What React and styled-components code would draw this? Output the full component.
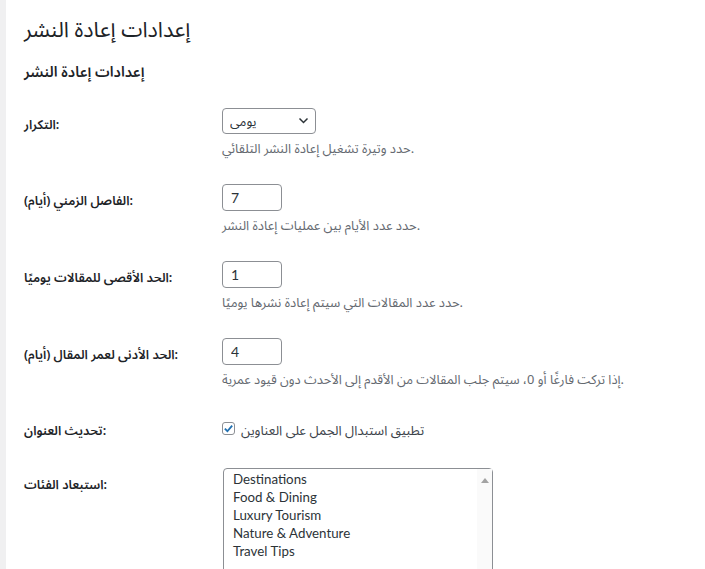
import React from "react";
import styled, { createGlobalStyle } from "styled-components";

const Global = createGlobalStyle`
  html, body { margin: 0; padding: 0; background: #fff; }
  body {
    font-family: "Segoe UI", "Noto Sans", "Noto Sans Arabic", "DejaVu Sans", sans-serif;
    color: #1d2327;
    font-size: 14px;
  }
`;

const Page = styled.div`
  display: flex;
  min-height: 100vh;
  overflow: hidden;
`;

const Edge = styled.div`
  width: 6px;
  flex: none;
  background: #f0f0f1;
`;

const Wrap = styled.div`
  flex: 1;
  padding: 14px 0 0 18px;
  direction: ltr;
`;

const Title = styled.h1`
  margin: 0;
  font-size: 21.5px;
  font-weight: 400;
  line-height: 30px;
  color: #1d2327;
`;

const SubTitle = styled.h2`
  margin: 17px 0 11px;
  font-size: 14.6px;
  font-weight: 600;
  line-height: 21px;
  color: #1d2327;
`;

const Row = styled.div`
  display: grid;
  grid-template-columns: 198px 1fr;
  align-items: start;
  padding: ${(p) => p.$top ?? 15}px 0 ${(p) => p.$bottom ?? 12}px;
`;

const Label = styled.div`
  font-size: 12.7px;
  font-weight: 600;
  line-height: 18px;
  color: #1d2327;
  margin-top: ${(p) => p.$offset ?? 7}px;
`;

const Field = styled.div`
  display: flex;
  flex-direction: column;
  align-items: flex-start;
`;

const Description = styled.p`
  margin: 5px 0 0;
  font-size: ${(p) => p.$size ?? 13}px;
  line-height: 18px;
  color: #646970;
`;

const SelectWrap = styled.div`
  position: relative;
  width: 94px;
  height: 26px;
`;

const Select = styled.select`
  appearance: none;
  -webkit-appearance: none;
  box-sizing: border-box;
  width: 100%;
  height: 100%;
  margin: 0;
  padding: 0 24px 0 7px;
  border: 1px solid #8c8f94;
  border-radius: 4px;
  background: #fff;
  font-family: inherit;
  font-size: 13px;
  color: #2c3338;
  direction: ltr;
  text-align: left;
  outline: none;
`;

const Chevron = styled.svg`
  position: absolute;
  right: 7px;
  top: 8px;
  width: 11px;
  height: 9px;
  pointer-events: none;
`;

const NumberInput = styled.input`
  box-sizing: border-box;
  width: 60px;
  height: 27px;
  margin: 0;
  padding: 0 8px;
  border: 1px solid #8c8f94;
  border-radius: 4px;
  background: #fff;
  font-family: "Lato", "Noto Sans", sans-serif;
  font-size: 14px;
  color: #2c3338;
  outline: none;
`;

const CheckLabel = styled.label`
  display: flex;
  align-items: center;
  gap: 6px;
  font-size: 13.2px;
  line-height: 18px;
  color: #3c434a;
`;

const CheckBox = styled.span`
  box-sizing: border-box;
  width: 13px;
  height: 13px;
  margin-top: -4px;
  border: 1px solid #8c8f94;
  border-radius: 3px;
  background: #fff;
  display: flex;
  align-items: center;
  justify-content: center;
`;

const ListBox = styled.div`
  box-sizing: border-box;
  width: 270px;
  height: 130px;
  margin-left: 1px;
  border: 1px solid #8c8f94;
  border-radius: 4px 4px 0 0;
  display: flex;
  background: #fff;
`;

const Options = styled.ul`
  list-style: none;
  margin: 0;
  padding: 1px 0 0 9px;
  flex: 1;
`;

const Option = styled.li`
  font-family: "Lato", "Noto Sans", sans-serif;
  font-size: 13.3px;
  line-height: 18px;
  color: #2c3338;
`;

const ScrollTrack = styled.div`
  width: 15px;
  flex: none;
  background: #fafafa;
  display: flex;
  justify-content: center;
  padding-top: 9px;
`;

const UpArrow = styled.div`
  width: 0;
  height: 0;
  border-left: 4px solid transparent;
  border-right: 4px solid transparent;
  border-bottom: 5px solid #a3a3a3;
`;

const categories = [
  "Destinations",
  "Food & Dining",
  "Luxury Tourism",
  "Nature & Adventure",
  "Travel Tips",
];

export default function App() {
  return (
    <>
      <Global />
      <Page>
        <Edge />
        <Wrap>
          <Title>إعدادات إعادة النشر</Title>
          <SubTitle>إعدادات إعادة النشر</SubTitle>

          <Row>
            <Label>التكرار:</Label>
            <Field>
              <SelectWrap>
                <Select defaultValue="daily">
                  <option value="daily">يومي</option>
                  <option value="weekly">أسبوعي</option>
                </Select>
                <Chevron viewBox="0 0 11 9">
                  <path d="M1.5 2.5 L5.5 6.5 L9.5 2.5" fill="none" stroke="#2c3338" strokeWidth="1.5" />
                </Chevron>
              </SelectWrap>
              <Description>حدد وتيرة تشغيل إعادة النشر التلقائي.</Description>
            </Field>
          </Row>

          <Row>
            <Label>الفاصل الزمني (أيام):</Label>
            <Field>
              <NumberInput type="text" defaultValue="7" />
              <Description>حدد عدد الأيام بين عمليات إعادة النشر.</Description>
            </Field>
          </Row>

          <Row>
            <Label>الحد الأقصى للمقالات يوميًا:</Label>
            <Field>
              <NumberInput type="text" defaultValue="1" />
              <Description>حدد عدد المقالات التي سيتم إعادة نشرها يوميًا.</Description>
            </Field>
          </Row>

          <Row>
            <Label>الحد الأدنى لعمر المقال (أيام):</Label>
            <Field>
              <NumberInput type="text" defaultValue="4" />
              <Description $size={12.85}>إذا تركت فارغًا أو 0، سيتم جلب المقالات من الأقدم إلى الأحدث دون قيود عمرية.</Description>
            </Field>
          </Row>

          <Row $top={21} $bottom={14}>
            <Label $offset={0}>تحديث العنوان:</Label>
            <CheckLabel>
              <CheckBox>
                <svg width="11" height="11" viewBox="0 0 12 12">
                  <path d="M2 6.2 L4.8 9 L10 2.8" fill="none" stroke="#2271b1" strokeWidth="2" />
                </svg>
              </CheckBox>
              تطبيق استبدال الجمل على العناوين
            </CheckLabel>
          </Row>

          <Row>
            <Label>استبعاد الفئات:</Label>
            <ListBox>
              <Options>
                {categories.map((c) => (
                  <Option key={c}>{c}</Option>
                ))}
              </Options>
              <ScrollTrack>
                <UpArrow />
              </ScrollTrack>
            </ListBox>
          </Row>
        </Wrap>
      </Page>
    </>
  );
}
